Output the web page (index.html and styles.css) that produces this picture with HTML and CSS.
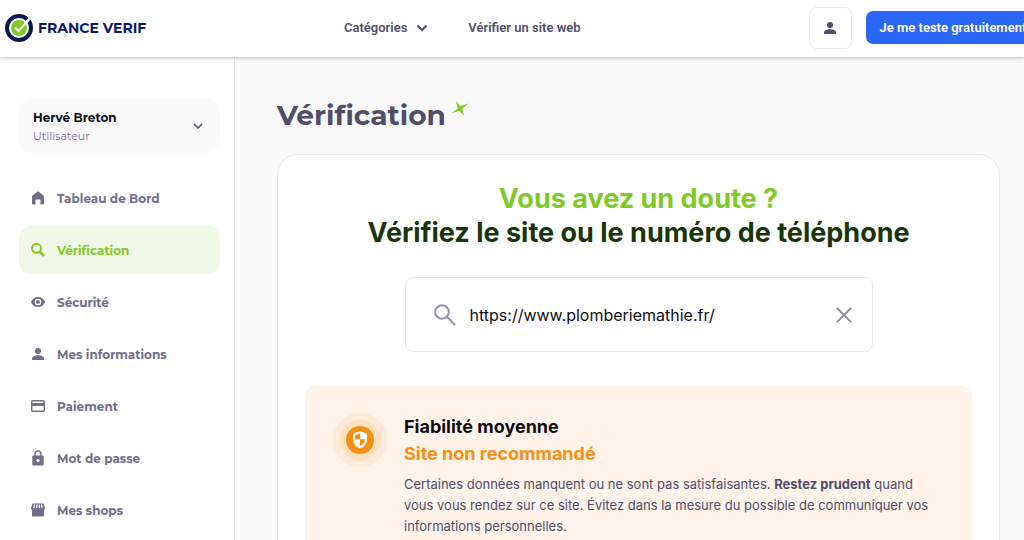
FILE: index.html
```html
<!DOCTYPE html>
<html lang="fr">
  <head>
    <meta charset="UTF-8" />
    <meta name="viewport" content="width=device-width, initial-scale=1" />
    <title>France Verif - Vérification</title>
    <link rel="stylesheet" href="styles.css">
  </head>
  <body>
    <header class="header">
      <a href="#" class="logo">
        <svg width="28" height="28" viewBox="0 0 28 28">
          <circle cx="14" cy="14" r="12" fill="none" stroke="#0b1a4b" stroke-width="4" />
          <circle cx="14" cy="14" r="8" fill="#7fc928" />
          <path d="M20 9l7-7" stroke="#fff" stroke-width="2" />
          <path d="M10 13.500l3.500 3.500L24 5.500" fill="none" stroke="#fff" stroke-width="2" />
        </svg>
        <span>FRANCE VERIF</span>
      </a>

      <nav class="nav">
        <a href="#">
          Catégories
          <svg width="12" height="8" viewBox="0 0 12 8" fill="none" stroke="currentColor" stroke-width="2">
            <path d="M1.500 1.500L6 6l4.500-4.500" />
          </svg>
        </a>
        <a href="#">Vérifier un site web</a>
      </nav>

      <div class="actions">
        <button class="user-btn" aria-label="Mon compte">
          <svg width="12" height="12" viewBox="0 0 12 12" fill="currentColor">
            <circle cx="6" cy="3" r="3" />
            <path d="M0 12v-1.500C0 8.500 3 7.300 6 7.300s6 1.200 6 3.200V12z" />
          </svg>
        </button>
        <button class="trial-btn">Je me teste gratuitement</button>
      </div>
    </header>

    <div class="layout">
      <aside class="sidebar">
        <button class="profile">
          <span class="profile-text">
            <span class="profile-name">Hervé Breton</span>
            <span class="profile-role">Utilisateur</span>
          </span>
          <svg width="10" height="6" viewBox="0 0 10 6" fill="none" stroke="currentColor" stroke-width="1.500">
            <path d="M1 1l4 4 4-4" />
          </svg>
        </button>

        <!-- Menu -->
        <nav class="menu">
          <a href="#">
            <svg width="16" height="16" viewBox="0 0 16 16" fill="currentColor">
              <path d="M8 1.500c.3 0 .6.100.800.300l4.600 3.700c.4.300.6.800.6 1.200v6.800c0 .6-.4 1-1 1h-2.500V10.500c0-.600-.4-1-1-1h-3c-.6 0-1 .400-1 1v4H3c-.6 0-1-.4-1-1V6.700c0-.4.200-.9.600-1.200l4.600-3.700c.2-.200.500-.3.800-.3z" />
            </svg>
            Tableau de Bord
          </a>
          <a href="#" class="active">
            <svg width="16" height="16" viewBox="0 0 16 16" fill="none" stroke="currentColor" stroke-width="2">
              <circle cx="6.500" cy="6.300" r="4.500" />
              <path d="M9.500 9.500l4.700 4.700" stroke-width="2.500" />
            </svg>
            Vérification
          </a>
          <a href="#">
            <svg width="16" height="16" viewBox="0 0 16 16">
              <path d="M8 3C4.500 3 2 5 1 8c1 3 3.500 5 7 5s6-2 7-5c-1-3-3.500-5-7-5z" fill="currentColor" />
              <circle cx="8" cy="8" r="2.600" fill="currentColor" stroke="#fff" stroke-width="1.400" />
            </svg>
            Sécurité
          </a>
          <a href="#">
            <svg width="16" height="16" viewBox="0 0 16 16" fill="currentColor">
              <circle cx="8" cy="5" r="3" />
              <path d="M2 14v-1.500c0-2 3-3.300 6-3.300s6 1.300 6 3.300V14z" />
            </svg>
            Mes informations
          </a>
          <a href="#">
            <svg width="16" height="16" viewBox="0 0 16 16">
              <rect x="1.700" y="2.700" width="12.600" height="10.600" rx="1" fill="none" stroke="currentColor" stroke-width="1.400" />
              <path d="M1 5h14v3H1z" fill="currentColor" />
            </svg>
            Paiement
          </a>
          <a href="#">
            <svg width="16" height="16" viewBox="0 0 16 16">
              <path d="M5 6V4a3 3 0 0 1 6 0v2" fill="none" stroke="currentColor" stroke-width="1.400" />
              <rect x="2.300" y="5.500" width="11.400" height="10" rx="1" fill="currentColor" />
              <circle cx="8" cy="10.500" r="1.600" fill="#fff" />
            </svg>
            Mot de passe
          </a>
          <a href="#">
            <svg width="16" height="16" viewBox="0 0 16 16">
              <path d="M2.500 1.500h11L15 6c0 1-.4 1.600-1 2v5.500c0 .6-.4 1-1 1H3c-.6 0-1-.4-1-1V8c-.6-.4-1-1-1-2z" fill="currentColor" />
              <path d="M4.500 2.500L3.800 6M6.900 2.500L6.600 6M9.100 2.500L9.400 6M11.500 2.500l.7 3.500" stroke="#fff" stroke-width="1.200" />
            </svg>
            Mes shops
          </a>
        </nav>
      </aside>

      <main class="main">
        <h1>
          Vérification
          <svg width="18" height="17" viewBox="0 0 18 17" fill="#7fc928">
            <path d="M5 1l4.200 5L17.500 3.500l-6.200 5.200 1.700 6.800-4.600-4.600L.5 13l6.300-4.300z" />
          </svg>
        </h1>

        <section class="card">
          <h2>
            <span>Vous avez un doute ?</span>
            Vérifiez le site ou le numéro de téléphone
          </h2>

          <form class="search">
            <svg width="22" height="22" viewBox="0 0 22 22" fill="none" stroke="currentColor" stroke-width="2">
              <circle cx="8" cy="8" r="6.800" />
              <path d="M13 13l8 8" />
            </svg>
            <input type="text" aria-label="Site ou numéro de téléphone" value="https://www.plomberiemathie.fr/" />
            <button type="reset" aria-label="Effacer">
              <svg width="16" height="16" viewBox="0 0 16 16" fill="none" stroke="currentColor" stroke-width="2">
                <path d="M1 1l14 14M15 1L1 15" />
              </svg>
            </button>
          </form>

          <!-- Result -->
          <div class="result">
            <svg class="result-icon" width="54" height="54" viewBox="0 0 54 54">
              <circle cx="27" cy="27" r="27" fill="#feead8" />
              <circle cx="27" cy="27" r="20.500" fill="#fee0c2" />
              <circle cx="27" cy="27" r="14" fill="#f88f14" />
              <path d="M27 18l7 2.800v5.400c0 4.200-2.800 7.700-7 9.300-4.200-1.600-7-5.100-7-9.300v-5.400z" fill="#fff" />
              <path d="M27 20.300v6h-5v-4zM27 26.300h5c-.2 3-2 5.500-5 6.800z" fill="#f88f14" />
            </svg>
            <div class="result-text">
              <h3>Fiabilité moyenne</h3>
              <h3 class="warning">Site non recommandé</h3>
              <p>
                Certaines données manquent ou ne sont pas satisfaisantes.
                <strong>Restez prudent</strong> quand vous vous rendez sur ce
                site. Évitez dans la mesure du possible de communiquer vos
                informations personnelles.
              </p>
            </div>
          </div>
        </section>
      </main>
    </div>
  </body>
</html>
```
FILE: styles.css
```css
* {
  box-sizing: border-box;
}

body {
  margin: 0;
  font-family: "Inter", sans-serif;
  background: #fafafa;
  color: #504d69;
  overflow-x: hidden;
}

a {
  color: inherit;
  text-decoration: none;
}

button {
  font-family: inherit;
  color: inherit;
  border: none;
  cursor: pointer;
}

svg {
  flex-shrink: 0;
}

.header {
  position: relative;
  display: flex;
  align-items: center;
  height: 57px;
  padding: 0 0 2px 5px;
  background: #fff;
  box-shadow: 0 1px 4px rgba(0, 0, 0, 0.25);
  font-family: "Roboto", sans-serif;
  white-space: nowrap;
}

.logo {
  display: flex;
  align-items: center;
  gap: 5px;
  flex: 0 0 339px;
  color: #0b1a6b;
  font-family: "Montserrat", "Inter", sans-serif;
  font-size: 14px;
  font-weight: 700;
}

.nav {
  display: flex;
  gap: 40px;
  font-size: 13px;
  font-weight: 600;
}

.nav a {
  display: flex;
  align-items: center;
  gap: 9px;
}

.actions {
  display: flex;
  align-items: center;
  gap: 14px;
  margin-left: 228px;
}

.user-btn {
  display: flex;
  align-items: center;
  justify-content: center;
  width: 43px;
  height: 42px;
  background: #fff;
  border: 1px solid #e8e8ec;
  border-radius: 7px;
}

.trial-btn {
  height: 33px;
  padding: 0 14px;
  background: #2b67f6;
  border-radius: 7px;
  color: #fff;
  font-size: 13px;
  font-weight: 600;
}

.layout {
  display: flex;
  min-height: calc(100vh - 57px);
}

.sidebar {
  flex: 0 0 235px;
  padding: 41px 14px 20px 19px;
  background: #fff;
  border-right: 1px solid #e6e6e9;
  font-family: "Montserrat", "Inter", sans-serif;
}

.profile {
  display: flex;
  align-items: center;
  justify-content: space-between;
  width: 100%;
  height: 55px;
  padding: 0 17px 0 14px;
  background: #fafafa;
  border-radius: 14px;
  text-align: left;
}

.profile-text {
  display: flex;
  flex-direction: column;
  gap: 2px;
  padding-top: 2px;
}

.profile-name {
  color: #0e0d14;
  font-size: 12px;
  line-height: 16px;
  font-weight: 700;
}

.profile-role {
  color: #75728b;
  font-size: 11px;
  line-height: 16px;
}

.menu {
  display: flex;
  flex-direction: column;
  gap: 4px;
  margin-top: 21px;
}

.menu a {
  display: flex;
  align-items: center;
  gap: 11px;
  height: 48px;
  padding-left: 11px;
  border-radius: 12px;
  color: #716e89;
  font-size: 12px;
  font-weight: 700;
}

.menu a.active {
  background: #f0f9e7;
  color: #7fc928;
}

.main {
  flex: 1;
  padding: 40px 24px 0 42px;
}

h1 {
  display: flex;
  align-items: flex-start;
  gap: 5px;
  margin: 0 0 21px;
  font-family: "Montserrat", "Inter", sans-serif;
  font-size: 28px;
  line-height: 36px;
  font-weight: 700;
}

h1 svg {
  margin-top: 3px;
}

.card {
  padding: 27px 27px 40px;
  background: #fff;
  border: 1px solid #e8e8ec;
  border-radius: 21px;
}

h2 {
  margin: 0;
  color: #1b350b;
  font-size: 27px;
  line-height: 34px;
  font-weight: 700;
  text-align: center;
}

h2 span {
  display: block;
  color: #7fc928;
}

.search {
  display: flex;
  align-items: center;
  gap: 14px;
  max-width: 468px;
  height: 75px;
  margin: 27px auto 34px;
  padding: 0 20px 0 28px;
  border: 1px solid #e8e8ec;
  border-radius: 8px;
  color: #9592a8;
}

.search input {
  flex: 1;
  min-width: 0;
  padding: 0;
  border: none;
  outline: none;
  background: none;
  color: #0e0d14;
  font-family: inherit;
  font-size: 16px;
}

.search button {
  display: flex;
  padding: 0;
  background: none;
}

.result {
  display: flex;
  align-items: flex-start;
  gap: 17px;
  padding: 27px 28px 28px;
  background: #fff3ea;
  border-radius: 10px;
}

h3 {
  margin: 0;
  color: #0e0d14;
  font-size: 18px;
  line-height: 27px;
  font-weight: 700;
}

h3.warning {
  color: #f88f14;
}

.result p {
  margin: 7px 0 0;
  font-size: 13px;
  line-height: 21px;
}
```
